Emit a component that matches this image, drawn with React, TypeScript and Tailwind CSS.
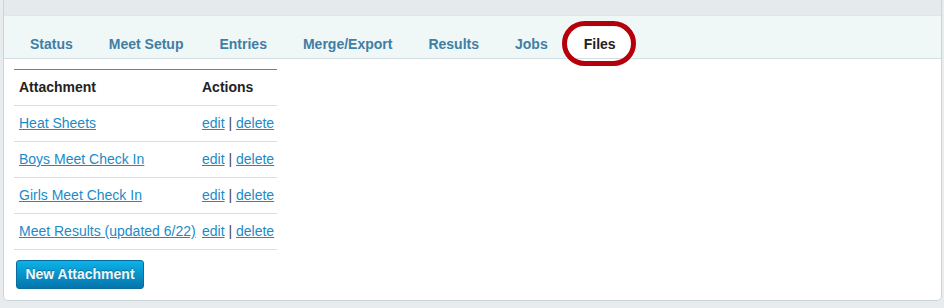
import React from 'react';

const tabs = ['Status', 'Meet Setup', 'Entries', 'Merge/Export', 'Results', 'Jobs', 'Files'];
const active = 'Files';

const attachments = ['Heat Sheets', 'Boys Meet Check In', 'Girls Meet Check In', 'Meet Results (updated 6/22)'];

function TabBar() {
  return (
    <div className="flex h-[44px] items-end border-t border-b border-t-[#dfe7e9] border-b-[#d3dfe2] bg-[#eff7f7] pl-[8px]">
      {tabs.map((tab) =>
        tab === active ? (
          <div key={tab} className="relative flex h-[31px] items-center rounded-t-[4px] bg-white px-[18px] pt-[3px] text-[14px] font-bold text-[#222]">
            {tab}
            <span className="pointer-events-none absolute left-[-4px] top-[-6px] h-[45px] w-[74px] rounded-full border-[5px] border-[#b5000c]" />
          </div>
        ) : (
          <div key={tab} className="flex h-[31px] items-center px-[18px] pt-[3px] text-[14px] font-bold text-[#3f7ea5]">
            {tab}
          </div>
        ),
      )}
    </div>
  );
}

function FilesTable() {
  return (
    <table className="w-[263px] table-fixed border-collapse border-t border-t-[#7d7d7d] text-[14px]">
      <thead>
        <tr className="h-[36px] border-b border-b-[#dcdcdc]">
          <th className="w-[183px] px-[5px] text-left font-bold text-[#222]">Attachment</th>
          <th className="px-[5px] text-left font-bold text-[#222]">Actions</th>
        </tr>
      </thead>
      <tbody>
        {attachments.map((name) => (
          <tr key={name} className="h-[36px] border-b border-b-[#dcdcdc]">
            <td className="whitespace-nowrap px-[5px]">
              <a href="#" className="text-[#1b8bc7] underline">{name}</a>
            </td>
            <td className="whitespace-nowrap px-[5px] text-[#444]">
              <a href="#" className="text-[#1b8bc7] underline">edit</a> | <a href="#" className="text-[#1b8bc7] underline">delete</a>
            </td>
          </tr>
        ))}
      </tbody>
    </table>
  );
}

export default function App() {
  return (
    <div className="h-[308px] w-[944px] overflow-hidden bg-[#e8ecee] font-['Liberation_Sans',Arial,sans-serif]">
      <div className="ml-[3px] mr-[2px] flex h-[301px] flex-col overflow-hidden rounded-b-[5px] border-x border-b border-[#cad5d9] bg-white">
        <div className="h-[15px] bg-[#e5eaed]" />
        <TabBar />
        <div className="pl-[10px] pt-[10px]">
          <FilesTable />
          <button className="ml-[2px] mt-[10px] h-[29px] w-[128px] rounded-[3px] border border-[#0a6c9b] bg-gradient-to-b from-[#0cb2ea] to-[#0575ab] text-[14px] font-bold text-[#eef8fc] [text-shadow:0_-1px_0_rgba(0,0,0,0.3)]">
            New Attachment
          </button>
        </div>
      </div>
    </div>
  );
}
